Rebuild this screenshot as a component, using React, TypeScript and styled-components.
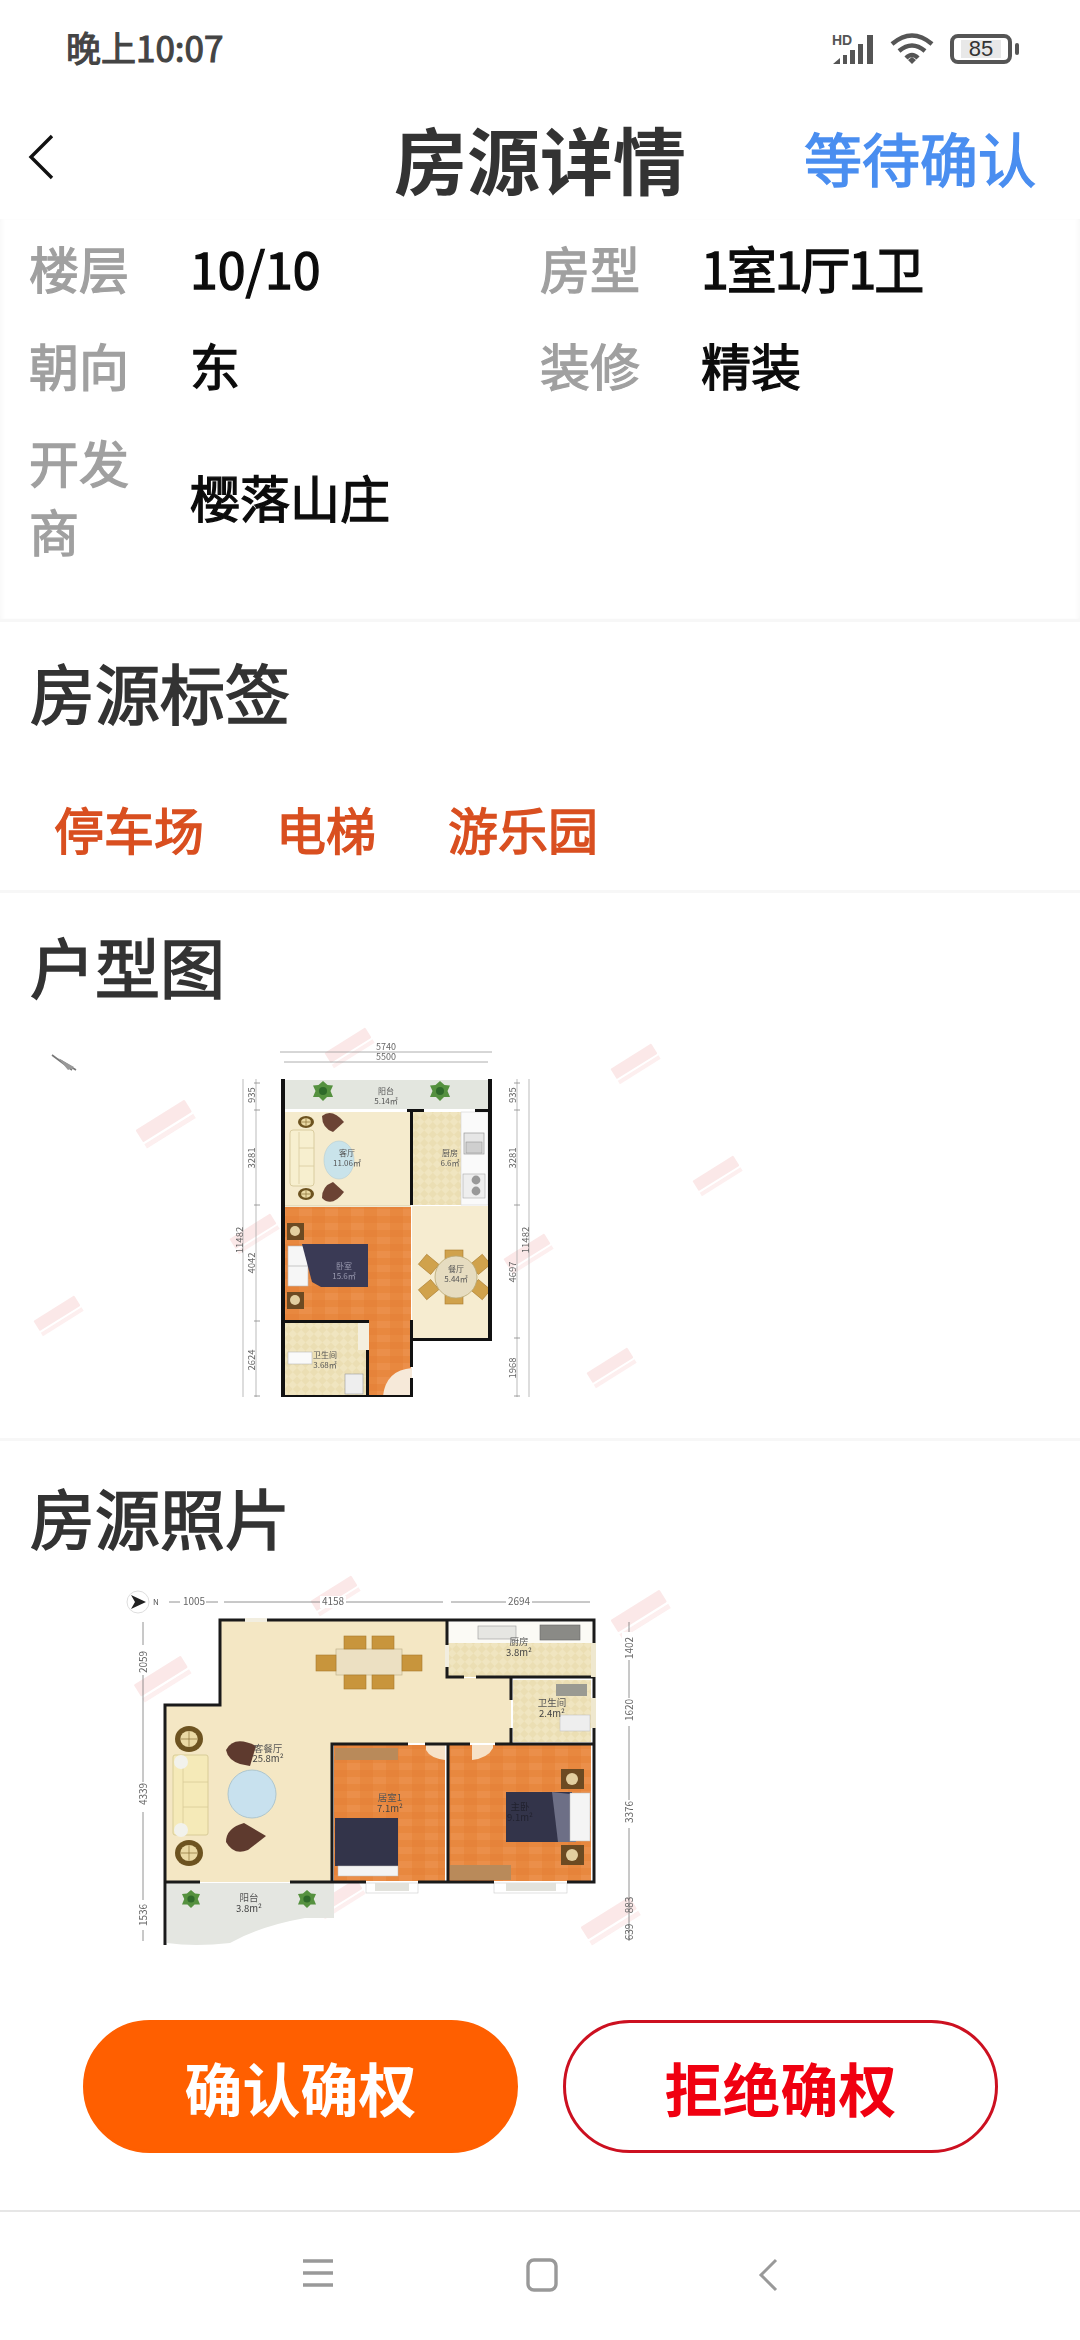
import React from 'react';
import styled, { createGlobalStyle } from 'styled-components';

const GlobalStyle = createGlobalStyle`
  html, body {
    margin: 0;
    padding: 0;
    background: #fff;
  }
  body {
    font-family: "Noto Sans CJK SC", "Noto Sans", sans-serif;
  }
`;

const Page = styled.div`
  width: 1080px;
  height: 2340px;
  overflow: hidden;
  background: #fff;
  display: flex;
  flex-direction: column;
`;

const StatusBar = styled.div`
  height: 100px;
  box-sizing: border-box;
  padding: 25px 68px 0 66px;
  display: flex;
  justify-content: space-between;
  align-items: flex-start;
`;

const Clock = styled.span`
  font-size: 35px;
  line-height: 44px;
  color: #444;
  -webkit-text-stroke: 1.1px #444;
`;

const StatusIcons = styled.div`
  display: flex;
  align-items: center;
  gap: 16px;
  height: 36px;
  margin-top: 6px;
`;

const Battery = styled.div`
  width: 62px;
  height: 30px;
  box-sizing: border-box;
  border: 4px solid #555;
  border-radius: 8px;
  padding: 2px 7px;
  position: relative;
  display: flex;

  &::after {
    content: '';
    position: absolute;
    right: -11px;
    top: 5px;
    width: 4px;
    height: 12px;
    border-radius: 2px;
    background: #555;
  }
`;

const BatteryLevel = styled.span`
  flex: 1;
  background: #e8e8e8;
  font-family: "Liberation Sans", sans-serif;
  font-size: 22px;
  line-height: 18px;
  color: #333;
  text-align: center;
`;

const Header = styled.header`
  height: 114px;
  padding: 0 44px 0 28px;
  display: flex;
  align-items: center;
  position: relative;
`;

const HeaderTitle = styled.h1`
  position: absolute;
  left: 0;
  right: 0;
  margin: 0;
  text-align: center;
  font-size: 73px;
  line-height: 114px;
  font-weight: 700;
  color: #333;
`;

const HeaderState = styled.span`
  margin-left: auto;
  font-size: 58px;
  line-height: 114px;
  color: #4a8ef0;
  -webkit-text-stroke: 1.5px #4a8ef0;
`;

const DetailCard = styled.section`
  height: 403px;
  margin-top: 5px;
  box-sizing: border-box;
  padding: 0 29px;
  border-bottom: 3px solid #f7f7f7;
  box-shadow: inset 4px 0 4px -2px #f8f8f8, inset -4px 0 4px -2px #f8f8f8;
`;

const DetailGrid = styled.div`
  display: grid;
  grid-template-columns: 511px 1fr;
`;

const DetailItem = styled.div<{ $wide?: boolean }>`
  display: flex;
  align-items: center;
  gap: 60px;
  padding: 14px 0;
  grid-column: ${({ $wide }) => ($wide ? '1 / -1' : 'auto')};
`;

const DetailLabel = styled.span`
  flex: 0 0 101px;
  font-size: 50px;
  line-height: 69px;
  color: #a0a0a0;
  -webkit-text-stroke: 1.3px #a0a0a0;
`;

const DetailValue = styled.span<{ $tight?: boolean }>`
  font-size: 50px;
  line-height: 69px;
  color: #0c0c0c;
  -webkit-text-stroke: 1.3px #0c0c0c;
  letter-spacing: ${({ $tight }) => ($tight ? '-2px' : '0')};
`;

const Section = styled.section<{ $top: number; $bottom: number; $line?: boolean }>`
  padding: ${({ $top }) => $top}px 0 ${({ $bottom }) => $bottom}px;
  border-bottom: ${({ $line }) => ($line ? '3px solid #f7f7f7' : 'none')};
`;

const SectionTitle = styled.h2`
  margin: 0;
  padding-left: 30px;
  font-size: 65px;
  line-height: 80px;
  font-weight: 400;
  color: #333;
  -webkit-text-stroke: 1.7px #333;
`;

const TagRow = styled.div`
  display: flex;
  gap: 72px;
  margin-top: 62px;
  padding-left: 54px;
`;

const Tag = styled.span`
  font-size: 50px;
  line-height: 70px;
  color: #d94f20;
  -webkit-text-stroke: 1.4px #d94f20;
`;

const PlanDrawing = styled.svg<{ $left: number; $gap: number }>`
  display: block;
  margin: ${({ $gap }) => $gap}px 0 0 ${({ $left }) => $left}px;
  filter: blur(0.45px);
  font-family: "Noto Sans CJK SC", sans-serif;
`;

const ActionRow = styled.div`
  display: flex;
  gap: 45px;
  margin-top: 40px;
  padding-left: 83px;
`;

const ActionButton = styled.button<{ $solid?: boolean }>`
  width: 435px;
  height: 133px;
  box-sizing: border-box;
  border-radius: 67px;
  border: 3px solid ${({ $solid }) => ($solid ? '#ff5f00' : '#cc1020')};
  background: ${({ $solid }) => ($solid ? '#ff5f00' : '#fff')};
  color: ${({ $solid }) => ($solid ? '#fff' : '#f00010')};
  font-family: inherit;
  font-size: 58px;
  font-weight: 700;
  padding: 0;
`;

const NavBar = styled.nav`
  margin-top: 57px;
  flex: 1;
  border-top: 2px solid #e6e6e6;
  display: flex;
  justify-content: center;
  align-items: flex-start;
  padding-top: 46px;
  gap: 192px;

  svg:last-child {
    margin-left: 8px;
  }
`;

const Chair = ({ x, y, w, h, c = '#c8953c' }: { x: number; y: number; w: number; h: number; c?: string }) => (
  <rect x={x} y={y} width={w} height={h} fill={c} stroke="#a87a2c" strokeWidth="0.6" />
);

const Lamp = ({ x, y, rx = 9, ry = 9 }: { x: number; y: number; rx?: number; ry?: number }) => (
  <g>
    <ellipse cx={x} cy={y} rx={rx} ry={ry} fill="#6d5320" />
    <ellipse cx={x} cy={y} rx={rx * 0.62} ry={ry * 0.62} fill="#ead9a4" />
    <path d={`M${x - rx * 0.6} ${y}H${x + rx * 0.6}M${x} ${y - ry * 0.6}V${y + ry * 0.6}`} stroke="#8a7038" strokeWidth="0.7" />
  </g>
);

const Plant = ({ x, y, r = 10 }: { x: number; y: number; r?: number }) => (
  <g>
    <path
      d={`M${x} ${y - r}L${x + r * 0.45} ${y - r * 0.6}L${x + r} ${y - r * 0.55}L${x + r * 0.75} ${y}L${x + r} ${y + r * 0.6}L${x + r * 0.4} ${y + r * 0.6}L${x} ${y + r}L${x - r * 0.4} ${y + r * 0.6}L${x - r} ${y + r * 0.6}L${x - r * 0.75} ${y}L${x - r} ${y - r * 0.55}L${x - r * 0.45} ${y - r * 0.6}Z`}
      fill="#55913f"
    />
    <circle cx={x} cy={y} r={r * 0.4} fill="#2f6a2a" />
  </g>
);

const Stamp = ({ x, y, s = 1 }: { x: number; y: number; s?: number }) => (
  <g transform={`translate(${x} ${y}) rotate(-32) scale(${s})`} opacity="0.16">
    <rect x="-24" y="-8" width="48" height="12" fill="#e57373" rx="1" />
    <rect x="-24" y="6" width="48" height="4" fill="#ef9a9a" />
  </g>
);

const DimText = ({ x, y, children, rotate, size = 9.5 }: { x: number; y: number; children: React.ReactNode; rotate?: boolean; size?: number }) => (
  <text
    x={x}
    y={y}
    fontSize={size}
    fill="#666"
    textAnchor="middle"
    dominantBaseline="middle"
    transform={rotate ? `rotate(-90 ${x} ${y})` : undefined}
  >
    {children}
  </text>
);

const RoomText = ({ x, y, children, size = 8, fill = '#555' }: { x: number; y: number; children: React.ReactNode; size?: number; fill?: string }) => (
  <text x={x} y={y} fontSize={size} fill={fill} textAnchor="middle" dominantBaseline="middle">
    {children}
  </text>
);

const FloorPatterns = ({ id }: { id: string }) => (
  <defs>
    <pattern id={`check-${id}`} width="12" height="12" patternUnits="userSpaceOnUse" patternTransform="rotate(45)">
      <rect width="12" height="12" fill="#f0e5c0" />
      <rect width="6" height="6" fill="#ebdeb3" />
      <rect x="6" y="6" width="6" height="6" fill="#ebdeb3" />
    </pattern>
    <pattern id={`wood-${id}`} width="26" height="14" patternUnits="userSpaceOnUse">
      <rect width="26" height="14" fill="#e8883f" />
      <rect x="0" y="0" width="13" height="7" fill="#e6833a" />
      <rect x="13" y="7" width="13" height="7" fill="#eb8f4a" />
    </pattern>
  </defs>
);

const FirstPlan = () => (
  <>
    <FloorPatterns id="a" />
    <Stamp x={165} y={103} s={1.2} />
    <Stamp x={254} y={213} />
    <Stamp x={58} y={295} />
    <Stamp x={635} y={43} />
    <Stamp x={717} y={155} />
    <Stamp x={349} y={27} />
    <Stamp x={528} y={233} />
    <Stamp x={611} y={347} />
    <path d="M52 35L72 50M60 40L76 50" stroke="#777" strokeWidth="1.6" />
    <path d="M58 38L74 47L68 50Z" fill="#999" />

    <path d="M280 32H492M284 42H488" stroke="#999" strokeWidth="0.8" />
    <DimText x={386} y={28} size={9}>5740</DimText>
    <DimText x={386} y={38} size={9}>5500</DimText>
    <path d="M243 59V377M256 59V377M517 59V377M529 59V377" stroke="#aaa" strokeWidth="0.8" />
    <path d="M254 63H260M254 90H260M254 185H260M254 301H260M254 376H260M514 63H520M514 90H520M514 185H520M514 318H520M514 376H520" stroke="#888" strokeWidth="0.8" />
    <DimText x={252} y={75} rotate>935</DimText>
    <DimText x={252} y={138} rotate>3281</DimText>
    <DimText x={252} y={243} rotate>4042</DimText>
    <DimText x={252} y={340} rotate>2624</DimText>
    <DimText x={240} y={220} rotate>11482</DimText>
    <DimText x={513} y={75} rotate>935</DimText>
    <DimText x={513} y={138} rotate>3281</DimText>
    <DimText x={513} y={252} rotate>4697</DimText>
    <DimText x={513} y={348} rotate>1968</DimText>
    <DimText x={526} y={220} rotate>11482</DimText>

    <rect x="285" y="60" width="203" height="29" fill="#e3e6df" />
    <rect x="285" y="92" width="126" height="93" fill="#f5ebcd" />
    <rect x="413" y="92" width="48" height="93" fill="url(#check-a)" />
    <rect x="461" y="92" width="27" height="93" fill="#fafafa" stroke="#ccc" strokeWidth="0.5" />
    <rect x="412" y="186" width="76" height="132" fill="#f6ecd0" />
    <path d="M285 187H411V376H369V300H285Z" fill="url(#wood-a)" />
    <rect x="285" y="303" width="81" height="72" fill="url(#check-a)" />

    <Plant x={323} y={71} />
    <Plant x={440} y={71} />
    <RoomText x={386} y={72}>阳台</RoomText>
    <RoomText x={386} y={82}>5.14㎡</RoomText>

    <rect x="290" y="110" width="24" height="56" rx="3" fill="#f7efcf" stroke="#d9cc9f" strokeWidth="1" />
    <path d="M299 112V164M299 128H314M299 146H314" stroke="#d9cc9f" strokeWidth="0.8" />
    <Lamp x={306} y={102} rx={8} ry={6} />
    <Lamp x={306} y={174} rx={8} ry={6} />
    <path d="M322 96Q332 88 344 102L333 112Q322 108 322 96Z" fill="#6b4334" />
    <path d="M322 178Q332 188 344 172L333 162Q322 166 322 178Z" fill="#6b4334" />
    <ellipse cx="339" cy="140" rx="15" ry="19" fill="#c9e3ea" stroke="#b5ccd4" strokeWidth="0.6" />
    <RoomText x={347} y={134}>客厅</RoomText>
    <RoomText x={347} y={144}>11.06㎡</RoomText>

    <RoomText x={450} y={134}>厨房</RoomText>
    <RoomText x={450} y={144}>6.6㎡</RoomText>
    <rect x="464" y="113" width="20" height="21" fill="#e6e6e6" stroke="#999" strokeWidth="0.7" />
    <rect x="466" y="122" width="16" height="11" fill="#cfcfcf" stroke="#888" strokeWidth="0.5" />
    <rect x="463" y="154" width="22" height="24" fill="#eee" stroke="#aaa" strokeWidth="0.6" />
    <circle cx="476" cy="160" r="4.4" fill="#999" />
    <circle cx="476" cy="171" r="4.4" fill="#999" />

    <rect x="287" y="203" width="17" height="17" fill="#6c4a22" />
    <circle cx="295" cy="211" r="5" fill="#e3cfa0" />
    <rect x="287" y="272" width="17" height="17" fill="#6c4a22" />
    <circle cx="295" cy="280" r="5" fill="#e3cfa0" />
    <rect x="288" y="226" width="20" height="40" fill="#f6f6f6" stroke="#bbb" strokeWidth="0.6" />
    <path d="M288 246H308" stroke="#bbb" strokeWidth="0.8" />
    <path d="M302 224H368V267H321L312 262Z" fill="#3a3a55" />
    <RoomText x={344} y={247} fill="#9a9ab0">卧室</RoomText>
    <RoomText x={344} y={257} fill="#9a9ab0">15.6㎡</RoomText>

    <g fill="#d0a24c" stroke="#a87a2c" strokeWidth="0.6">
      <rect x="445" y="230" width="18" height="14" />
      <rect x="445" y="270" width="18" height="14" />
      <rect x="421" y="238" width="16" height="13" transform="rotate(40 429 244)" />
      <rect x="472" y="238" width="16" height="13" transform="rotate(-40 480 244)" />
      <rect x="421" y="263" width="16" height="13" transform="rotate(-40 429 270)" />
      <rect x="472" y="263" width="16" height="13" transform="rotate(40 480 270)" />
    </g>
    <circle cx="456" cy="257" r="21" fill="#e6dcc0" stroke="#b9a875" strokeWidth="0.8" />
    <RoomText x={456} y={250}>餐厅</RoomText>
    <RoomText x={456} y={260}>5.44㎡</RoomText>

    <rect x="288" y="332" width="24" height="12" fill="#fafafa" stroke="#bbb" strokeWidth="0.6" />
    <rect x="345" y="354" width="18" height="20" fill="#eee" stroke="#999" strokeWidth="0.6" />
    <RoomText x={325} y={336}>卫生间</RoomText>
    <RoomText x={325} y={346}>3.68㎡</RoomText>
    <path d="M412 348V376H383Q386 350 412 348Z" fill="#f6e9d9" />

    <g fill="#111">
      <rect x="281" y="59" width="4" height="318" />
      <rect x="488" y="59" width="4" height="262" />
      <rect x="412" y="318" width="80" height="3" />
      <rect x="407" y="89" width="17" height="3" />
      <rect x="475" y="89" width="13" height="3" />
      <rect x="410" y="92" width="3" height="93" />
      <rect x="410" y="300" width="3" height="47" />
      <rect x="410" y="358" width="3" height="19" />
      <rect x="281" y="300" width="88" height="3" />
      <rect x="366" y="330" width="3" height="47" />
      <rect x="281" y="375" width="132" height="2" />
    </g>
    <rect x="358" y="303" width="11" height="27" fill="#f4efdf" />
    <rect x="285" y="185" width="126" height="1.6" fill="#e5dcbc" />
  </>
);

const SecondPlan = () => (
  <>
    <FloorPatterns id="b" />
    <Stamp x={62} y={118} s={1.15} />
    <Stamp x={340} y={140} s={1.2} />
    <Stamp x={540} y={53} s={1.2} />
    <Stamp x={510} y={360} s={1.2} />
    <Stamp x={240} y={338} />
    <Stamp x={235} y={35} />

    <circle cx="38" cy="42" r="11" fill="#fff" stroke="#ddd" strokeWidth="1" />
    <path d="M31 35L46 42L31 49L35 42Z" fill="#222" />
    <text x="56" y="43" fontSize="8" fill="#555" textAnchor="middle" dominantBaseline="middle">N</text>
    <path d="M69 42H118M124 42H343M351 42H490M43 62V381M529 62V381" stroke="#777" strokeWidth="0.8" />
    <rect x="80" y="36" width="26" height="12" fill="#fff" />
    <rect x="220" y="36" width="26" height="12" fill="#fff" />
    <rect x="406" y="36" width="26" height="12" fill="#fff" />
    <DimText x={94} y={42} size={10}>1005</DimText>
    <DimText x={233} y={42} size={10}>4158</DimText>
    <DimText x={419} y={42} size={10}>2694</DimText>
    <rect x="36" y="85" width="14" height="30" fill="#fff" />
    <rect x="36" y="222" width="14" height="30" fill="#fff" />
    <rect x="36" y="340" width="14" height="30" fill="#fff" />
    <rect x="522" y="72" width="14" height="28" fill="#fff" />
    <rect x="522" y="138" width="14" height="28" fill="#fff" />
    <rect x="522" y="240" width="14" height="28" fill="#fff" />
    <DimText x={44} y={102} rotate size={10}>2059</DimText>
    <DimText x={44} y={234} rotate size={10}>4339</DimText>
    <DimText x={44} y={355} rotate size={10}>1536</DimText>
    <DimText x={530} y={88} rotate size={10}>1402</DimText>
    <DimText x={530} y={150} rotate size={10}>1620</DimText>
    <DimText x={530} y={252} rotate size={10}>3376</DimText>
    <DimText x={530} y={345} rotate size={10}>883</DimText>
    <DimText x={530} y={372} rotate size={10}>639</DimText>

    <path d="M120 60H346V118H411V183H232V322H65V145H120Z" fill="#f4e7c4" />
    <rect x="347" y="62" width="146" height="21" fill="#fbfaf5" />
    <rect x="347" y="83" width="146" height="34" fill="url(#check-b)" />
    <rect x="413" y="120" width="78" height="62" fill="url(#check-b)" />
    <rect x="234" y="185" width="111" height="136" fill="url(#wood-b)" />
    <rect x="349" y="185" width="142" height="136" fill="url(#wood-b)" />
    <path d="M67 323H234V358H205Q160 366 130 383Q95 387 67 383Z" fill="#e4e6e1" />

    <rect x="236" y="89" width="66" height="26" fill="#ece0c2" stroke="#c2b48c" strokeWidth="0.7" />
    <Chair x={244} y={76} w={22} h={13} />
    <Chair x={272} y={76} w={22} h={13} />
    <Chair x={244} y={115} w={22} h={14} />
    <Chair x={272} y={115} w={22} h={14} />
    <Chair x={216} y={95} w={20} h={16} />
    <Chair x={302} y={95} w={20} h={16} />
    <rect x="378" y="66" width="38" height="13" fill="#e6e6e2" stroke="#999" strokeWidth="0.6" />
    <rect x="440" y="65" width="40" height="15" fill="#8a8a86" stroke="#666" strokeWidth="0.6" />
    <RoomText x={419} y={82} size={9.5}>厨房</RoomText>
    <RoomText x={419} y={93} size={9.5} fill="#444">3.8m²</RoomText>
    <rect x="456" y="124" width="31" height="12" fill="#9a9a92" />
    <rect x="460" y="155" width="30" height="16" fill="#eee" stroke="#bbb" strokeWidth="0.5" />
    <RoomText x={452} y={143} size={9.5}>卫生间</RoomText>
    <RoomText x={452} y={154} size={9.5} fill="#444">2.4m²</RoomText>

    <rect x="73" y="195" width="35" height="80" rx="2" fill="#f5eab8" stroke="#d8cc98" strokeWidth="1" />
    <path d="M83 197V273M83 222H108M83 247H108" stroke="#d8cc98" strokeWidth="0.8" />
    <circle cx="81" cy="202" r="7" fill="#f2f2ec" />
    <circle cx="81" cy="270" r="7" fill="#f2f2ec" />
    <Lamp x={89} y={179} rx={14} ry={13} />
    <Lamp x={89} y={293} rx={14} ry={13} />
    <path d="M126 190Q134 175 156 186L150 206L140 204Q128 200 126 190Z" fill="#5e3a2e" />
    <path d="M126 282Q134 296 148 290L166 276L144 263Q126 268 126 282Z" fill="#5e3a2e" />
    <ellipse cx="152" cy="234" rx="24" ry="24" fill="#c8e1ee" stroke="#aec6ce" strokeWidth="1" />
    <RoomText x={168} y={189} size={9.5}>客餐厅</RoomText>
    <RoomText x={168} y={199} size={9.5} fill="#444">25.8m²</RoomText>

    <rect x="235" y="188" width="63" height="12" fill="#b98a5a" />
    <rect x="350" y="305" width="61" height="15" fill="#b98a5a" />
    <path d="M345 185H326V190Q330 198 345 200Z" fill="#f6e2c8" />
    <path d="M372 185H393V188Q388 198 372 200Z" fill="#f6e2c8" />
    <rect x="235" y="258" width="63" height="48" fill="#33344a" />
    <rect x="238" y="306" width="60" height="10" fill="#f4f4f4" stroke="#bbb" strokeWidth="0.5" />
    <RoomText x={290} y={238} size={9.5}>居室1</RoomText>
    <RoomText x={290} y={249} size={9.5} fill="#444">7.1m²</RoomText>
    <rect x="406" y="232" width="66" height="50" fill="#33344a" />
    <path d="M452 232L470 234L476 282H458Z" fill="#6d6f86" />
    <rect x="470" y="233" width="20" height="48" fill="#f4f4f4" stroke="#bbb" strokeWidth="0.5" />
    <rect x="461" y="209" width="23" height="20" fill="#6c4a22" />
    <circle cx="472" cy="219" r="6" fill="#e3cfa0" />
    <rect x="461" y="285" width="23" height="20" fill="#6c4a22" />
    <circle cx="472" cy="295" r="6" fill="#e3cfa0" />
    <RoomText x={420} y={247} size={9.5} fill="#22222f">主卧</RoomText>
    <RoomText x={420} y={258} size={9.5} fill="#22222f">9.1m²</RoomText>

    <Plant x={91} y={339} r={9} />
    <Plant x={207} y={339} r={9} />
    <RoomText x={149} y={338} size={9.5}>阳台</RoomText>
    <RoomText x={149} y={349} size={9.5} fill="#444">3.8m²</RoomText>

    <rect x="266" y="323" width="52" height="10" fill="#fff" stroke="#ccc" strokeWidth="0.6" />
    <rect x="275" y="323" width="34" height="8" fill="#e2e2dc" />
    <rect x="394" y="323" width="73" height="10" fill="#fff" stroke="#ccc" strokeWidth="0.6" />
    <rect x="406" y="323" width="50" height="8" fill="#e2e2dc" />

    <path
      d="M65 385V145H120V60H494V322H467M394 322H318M266 322H190M100 322H65M232 322V184H308M325 184H370M395 184H494M347 60V117H364M376 117H494M411 118V140M411 168V184M348 184V322"
      fill="none"
      stroke="#1a1a1a"
      strokeWidth="3"
    />
    <rect x="145" y="58" width="22" height="4" fill="#f2eee0" />
    <rect x="491" y="83" width="5" height="34" fill="#efe8cf" />
    <rect x="491" y="138" width="5" height="30" fill="#efe8cf" />
    <rect x="345" y="85" width="4" height="22" fill="#f2eee0" />
  </>
);

const App = () => (
  <Page>
    <GlobalStyle />
    <StatusBar>
      <Clock>晚上10:07</Clock>
      <StatusIcons>
        <svg width="42" height="32" viewBox="0 0 42 32">
          <text x="0" y="12" fontSize="14" fontWeight="700" fill="#555" fontFamily="Liberation Sans, sans-serif">HD</text>
          <path d="M1 31L8 25V31ZM11 22H15V31H11ZM18 17H23V31H18ZM26 11H31V31H26ZM35 2H41V31H35Z" fill="#555" />
        </svg>
        <svg width="44" height="32" viewBox="0 0 44 32">
          <path d="M2 11Q22 -6 42 11M9 18Q22 7 35 18M16 25Q22 19 28 25" fill="none" stroke="#555" strokeWidth="4.4" />
          <path d="M18 27L22 31L26 27L22 24Z" fill="#555" />
        </svg>
        <Battery>
          <BatteryLevel>85</BatteryLevel>
        </Battery>
      </StatusIcons>
    </StatusBar>

    <Header>
      <svg width="26" height="46" viewBox="0 0 26 46">
        <path d="M24 2L3 23L24 44" fill="none" stroke="#111" strokeWidth="3.4" />
      </svg>
      <HeaderTitle>房源详情</HeaderTitle>
      <HeaderState>等待确认</HeaderState>
    </Header>

    <DetailCard>
      <DetailGrid>
        <DetailItem>
          <DetailLabel>楼层</DetailLabel>
          <DetailValue>10/10</DetailValue>
        </DetailItem>
        <DetailItem>
          <DetailLabel>房型</DetailLabel>
          <DetailValue $tight>1室1厅1卫</DetailValue>
        </DetailItem>
        <DetailItem>
          <DetailLabel>朝向</DetailLabel>
          <DetailValue>东</DetailValue>
        </DetailItem>
        <DetailItem>
          <DetailLabel>装修</DetailLabel>
          <DetailValue>精装</DetailValue>
        </DetailItem>
        <DetailItem $wide>
          <DetailLabel>开发商</DetailLabel>
          <DetailValue>樱落山庄</DetailValue>
        </DetailItem>
      </DetailGrid>
    </DetailCard>

    <Section $top={29} $bottom={27} $line>
      <SectionTitle>房源标签</SectionTitle>
      <TagRow>
        <Tag>停车场</Tag>
        <Tag>电梯</Tag>
        <Tag>游乐园</Tag>
      </TagRow>
    </Section>

    <Section $top={32} $bottom={0} $line>
      <SectionTitle>户型图</SectionTitle>
      <PlanDrawing width="760" height="418" viewBox="0 0 760 418" $left={0} $gap={15}>
        <FirstPlan />
      </PlanDrawing>
    </Section>

    <Section $top={35} $bottom={0}>
      <SectionTitle>房源照片</SectionTitle>
      <PlanDrawing width="600" height="420" viewBox="0 0 600 420" $left={100} $gap={4}>
        <SecondPlan />
      </PlanDrawing>
    </Section>

    <ActionRow>
      <ActionButton $solid>确认确权</ActionButton>
      <ActionButton>拒绝确权</ActionButton>
    </ActionRow>

    <NavBar>
      <svg width="32" height="30" viewBox="0 0 32 30">
        <path d="M1 3H31M1 15H31M1 27H31" stroke="#999" strokeWidth="3.4" />
      </svg>
      <svg width="32" height="34" viewBox="0 0 32 34">
        <rect x="2" y="2" width="28" height="30" rx="6" fill="none" stroke="#999" strokeWidth="3.4" />
      </svg>
      <svg width="20" height="34" viewBox="0 0 20 34">
        <path d="M18 2L3 17L18 32" fill="none" stroke="#999" strokeWidth="3" />
      </svg>
    </NavBar>
  </Page>
);

export default App;
